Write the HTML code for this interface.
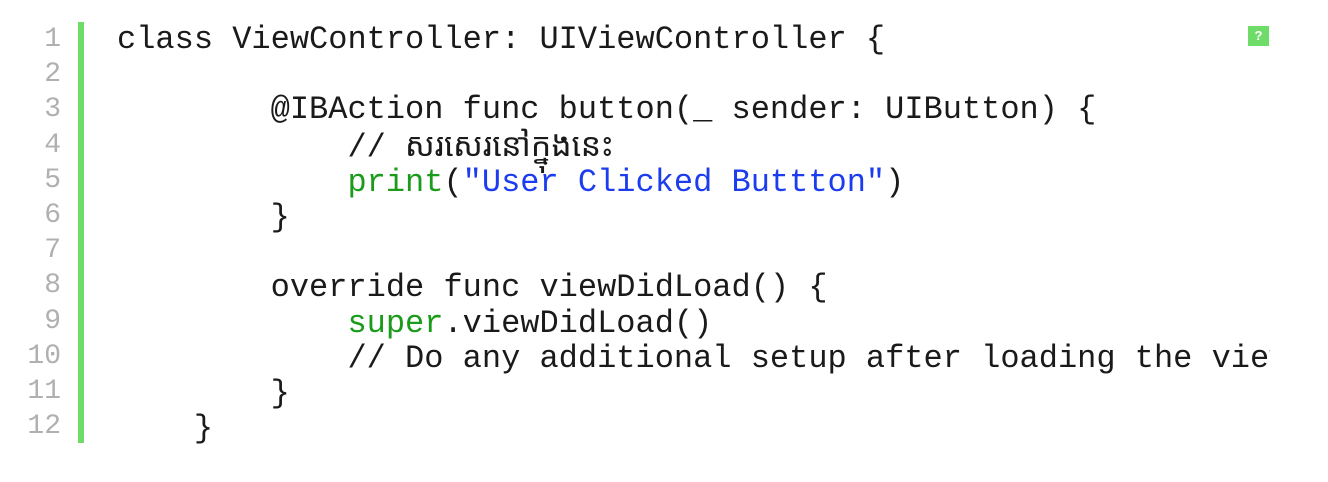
<!DOCTYPE html>
<html><head><meta charset="utf-8"><style>
body{margin:0;width:1328px;height:482px;background:#fff;overflow:hidden;position:relative;font-family:"Liberation Mono",monospace;}
.nums{position:absolute;left:0;top:22px;width:61px;text-align:right;color:#b0b0b0;font-size:28px;line-height:35.2px;}
.bar{position:absolute;left:78px;top:22px;width:6px;height:421px;background:#6fdc6a;}
.code{position:absolute;left:117px;top:22px;width:1153px;overflow:hidden;white-space:pre;font-size:32px;line-height:35.2px;color:#1a1a1a;}
.g{color:#1a9c1a}.b{color:#1c3cf0}
.badge{position:absolute;left:1248px;top:26px;width:21px;height:20px;background:#6fdc6a;color:#fff;font:bold 13px "Liberation Sans",sans-serif;text-align:center;line-height:20px;}
</style></head><body>
<div class="nums">1<br>2<br>3<br>4<br>5<br>6<br>7<br>8<br>9<br>10<br>11<br>12</div>
<div class="bar"></div>
<div class="code">class ViewController: UIViewController {

        @IBAction func button(_ sender: UIButton) {
            // <span style="font-family:'Liberation Sans','Noto Sans Khmer',sans-serif">សរសេរនៅក្នុងនេះ</span>
            <span class="g">print</span>(<span class="b">"User Clicked Buttton"</span>)
        }

        override func viewDidLoad() {
            <span class="g">super</span>.viewDidLoad()
            // Do any additional setup after loading the view
        }
    }</div>
<div class="badge">?</div>
</body></html>
